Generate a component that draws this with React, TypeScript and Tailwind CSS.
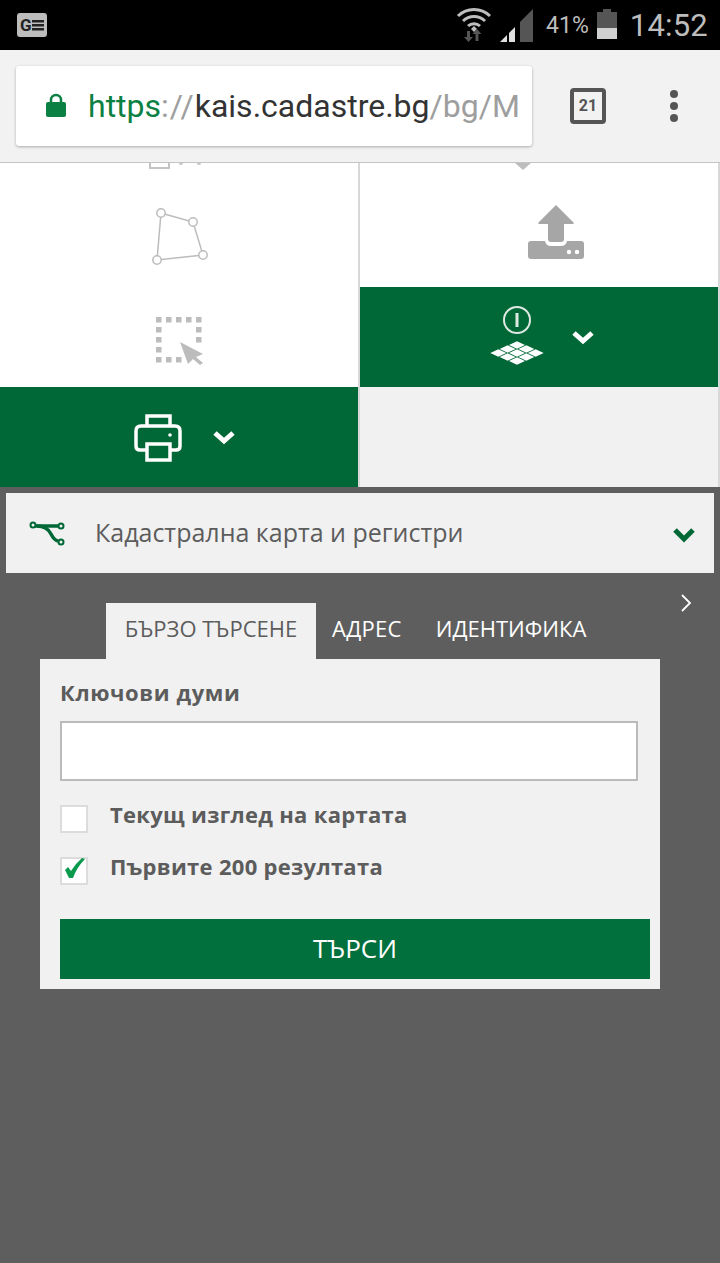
import React from 'react';

const GREEN = 'bg-[#006837]';

// статус лента
const StatusBar: React.FC = () => (
  <div className="h-[50px] bg-black flex items-center pl-[17px] pr-[12px] font-['Roboto',sans-serif] text-[#bdbdbd]">
    <svg width="30" height="24" viewBox="0 0 30 24">
      <rect width="30" height="24" rx="3" fill="#bdbdbd" />
      <text x="3" y="18" fontSize="17" fontWeight="700" fill="#222" fontFamily="Roboto, sans-serif">G</text>
      <rect x="15" y="7" width="12" height="2.5" fill="#222" />
      <rect x="15" y="11" width="12" height="2.5" fill="#222" />
      <rect x="15" y="15" width="12" height="2.5" fill="#222" />
    </svg>
    <div className="flex-1" />
    <svg width="36" height="36" viewBox="0 0 36 36" className="-mt-[3px]">
      <path d="M2 10 A23 23 0 0 1 34 10" fill="none" stroke="#bdbdbd" strokeWidth="3" />
      <path d="M7 15 A16 16 0 0 1 29 15" fill="none" stroke="#bdbdbd" strokeWidth="3" />
      <path d="M12 20 A9 9 0 0 1 24 20" fill="none" stroke="#bdbdbd" strokeWidth="3" />
      <path d="M15 23 L18 20 L21 23 L18 26 Z" fill="#bdbdbd" />
      <path d="M11 25 h3 v6 h3 l-4.500 5 l-4.500 -5 h3 Z" fill="#555" />
      <path d="M21 23 l4.500 5 h-3 v7 h-3 v-7 h-3 Z" fill="#555" />
    </svg>
    <svg width="33" height="33" viewBox="0 0 33 33" className="ml-[8px] mt-[1px]">
      <path d="M0 33 L7 26 V33 Z" fill="#e0e0e0" />
      <path d="M9 24 L15 18 V33 H9 Z" fill="#e0e0e0" />
      <path d="M20 13 L33 0 V33 H20 Z" fill="#555" />
    </svg>
    <span className="ml-[13px] text-[23px] leading-none mt-[1px]">41%</span>
    <svg width="20" height="30" viewBox="0 0 20 30" className="ml-[8px] -mt-[2px]">
      <rect x="6" y="0" width="8" height="3" fill="#555" />
      <rect x="0" y="3" width="20" height="16" fill="#555" />
      <rect x="0" y="19" width="20" height="11" fill="#d0d0d0" />
    </svg>
    <span className="ml-[13px] text-[31px] leading-none tracking-[0.2px]">14:52</span>
  </div>
);

// адресна лента
const BrowserBar: React.FC = () => (
  <div className="h-[113px] bg-[#f2f2f2] border-b border-[#c4c4c4] flex items-start pt-[16px] pl-[16px] font-['Roboto',sans-serif]">
    <div className="w-[516px] h-[80px] bg-white rounded-[3px] shadow-[0_1px_3px_rgba(0,0,0,0.3)] flex items-center pl-[30px] overflow-hidden">
      <svg width="20" height="26" viewBox="0 0 20 26" className="shrink-0">
        <path d="M5 10 V7 a5 5 0 0 1 10 0 V10" fill="none" stroke="#0b8043" strokeWidth="2.500" />
        <rect y="9" width="20" height="15" rx="2" fill="#0b8043" />
      </svg>
      <span className="ml-[22px] text-[32px] leading-none whitespace-nowrap">
        <span className="text-[#0b8043]">https</span>
        <span className="text-[#9e9e9e] tracking-[1px]">://</span>
        <span className="text-[#333]">kais.cadastre.bg</span>
        <span className="text-[#9e9e9e]">/bg/M</span>
      </span>
    </div>
    <div className="ml-[38px] mt-[22px] w-[36px] h-[36px] border-[4px] border-[#555] rounded-[4px] flex items-center justify-center text-[#555] text-[16px] font-bold leading-none">
      21
    </div>
    <div className="ml-[64px] mt-[24px] flex flex-col gap-[4px]">
      <div className="w-[8px] h-[8px] rounded-full bg-[#555]" />
      <div className="w-[8px] h-[8px] rounded-full bg-[#555]" />
      <div className="w-[8px] h-[8px] rounded-full bg-[#555]" />
    </div>
  </div>
);

const DownChevron: React.FC = () => (
  <svg width="24" height="16" viewBox="0 0 24 16">
    <path d="M3 4 L12 12 L21 4" fill="none" stroke="#fff" strokeWidth="5" />
  </svg>
);

const PolygonIcon: React.FC = () => (
  <svg width="60" height="60" viewBox="0 0 60 60" fill="#fff" stroke="#bcbcbc" strokeWidth="1.500">
    <path d="M9 5 L41 14 L51 47 L5 52 Z" fill="none" />
    <circle cx="9" cy="5" r="4.200" />
    <circle cx="41" cy="14" r="4.200" />
    <circle cx="51" cy="47" r="4.200" />
    <circle cx="5" cy="52" r="4.200" />
  </svg>
);

const SelectIcon: React.FC = () => (
  <svg width="50" height="50" viewBox="0 0 50 50" fill="#bcbcbc">
    {[0, 10, 20, 30, 40].map((x) => <rect key={`t${x}`} x={x} y="0" width="5.500" height="5.500" />)}
    {[10, 20, 30].map((y) => <rect key={`l${y}`} x="0" y={y} width="5.500" height="5.500" />)}
    {[10, 20].map((y) => <rect key={`r${y}`} x="40" y={y} width="5.500" height="5.500" />)}
    {[0, 10, 20].map((x) => <rect key={`b${x}`} x={x} y="40" width="5.500" height="5.500" />)}
    <path d="M24 25 L47 37 L40 40 L47 46 L44 48 L37 42 L32 47 Z" />
  </svg>
);

const UploadIcon: React.FC = () => (
  <svg width="56" height="54" viewBox="0 0 56 54">
    <path d="M28 0 L46 18 Q46 19 44 19 H36 V34 Q36 37 33 37 H23 Q20 37 20 34 V19 H12 Q10 19 10 18 Z" fill="#a6a6a6" />
    <path d="M3 36 H17 Q18 41 23 41 H33 Q38 41 39 36 H53 Q56 36 56 39 V51 Q56 54 53 54 H3 Q0 54 0 51 V39 Q0 36 3 36 Z" fill="#a6a6a6" />
    <circle cx="41" cy="47" r="2.200" fill="#fff" />
    <circle cx="49" cy="47" r="2.200" fill="#fff" />
  </svg>
);

const PrinterIcon: React.FC = () => (
  <svg width="48" height="48" viewBox="0 0 48 48" fill="none" stroke="#fff" strokeWidth="3.500" className="mt-[2px]">
    <path d="M13 12 V2 H36 V12" />
    <path d="M12 36 H6 Q2 36 2 32 V17 Q2 12 7 12 H41 Q46 12 46 17 V32 Q46 36 42 36 H36" />
    <rect x="13" y="30" width="23" height="16" />
    <circle cx="36" cy="21" r="1.800" fill="#fff" stroke="none" />
  </svg>
);

// 3x3 ромбоидна мрежа под иконата за информация
const GRID_CELLS = [-1, 0, 1].flatMap((i) => [-1, 0, 1].map((j) => ({ i, j })));

const InfoGridIcon: React.FC = () => (
  <svg width="56" height="62" viewBox="0 0 56 62" fill="#fff">
    <circle cx="28" cy="14" r="13" fill="none" stroke="#dfe9e3" strokeWidth="2" />
    <rect x="26.500" y="7" width="3" height="14" fill="#dfe9e3" />
    {GRID_CELLS.map(({ i, j }) => {
      const cx = 28 + (i - j) * 9.33;
      const cy = 47 + (i + j) * 4;
      return <path key={`${i}${j}`} d={`M${cx - 8} ${cy} L${cx} ${cy - 3.7} L${cx + 8} ${cy} L${cx} ${cy + 3.7} Z`} />;
    })}
  </svg>
);

const RouteIcon: React.FC = () => (
  <svg width="36" height="26" viewBox="0 0 36 26" fill="none" stroke="#006837" strokeWidth="3.500">
    <path d="M6 6 H30" />
    <path d="M8 6 Q18 6 22 14 Q25 20 29 21" />
    <circle cx="4" cy="5" r="2.500" strokeWidth="2" fill="#f1f1f1" />
    <circle cx="32" cy="6" r="2.500" strokeWidth="2" fill="#f1f1f1" />
    <circle cx="32" cy="22" r="2.500" strokeWidth="2" fill="#f1f1f1" />
  </svg>
);

const CheckBox: React.FC<{ checked?: boolean; label: string }> = ({ checked, label }) => (
  <div className="flex items-start h-[28px]">
    <div className="relative w-[28px] h-[28px] bg-white border-[2px] border-[#dcdcdc] shrink-0">
      {checked && (
        <svg width="24" height="24" viewBox="0 0 24 24" className="absolute left-0 top-0 overflow-visible">
          <path d="M3 11 L6 8 L9 12 Q13 5 20 -1 L23 0 Q15 8 11 19 L7 19 Z" fill="#0a9a4e" />
        </svg>
      )}
    </div>
    <span className="ml-[22px] -mt-[6px] text-[22px] leading-[30px] font-bold text-[#5c5c5c] tracking-[0.3px]">{label}</span>
  </div>
);

const App: React.FC = () => {
  return (
    <div className="w-[720px] h-[1263px] bg-[#5e5e5e] overflow-hidden font-['Open_Sans',sans-serif]">
      <StatusBar />
      <BrowserBar />

      {/* плочки с инструменти */}
      <div className="flex h-[324px] bg-[#d8d8d8]">
        <div className="w-[358px] flex flex-col">
          <div className="h-[224px] bg-white flex flex-col items-center">
            <svg width="60" height="6" viewBox="0 0 60 6">
              <path d="M1 0 V5 H20 V0" fill="none" stroke="#c4c4c4" strokeWidth="2" />
              <circle cx="32" cy="0" r="2" fill="#c4c4c4" />
              <circle cx="50" cy="0" r="2" fill="#c4c4c4" />
            </svg>
            <div className="mt-[39px] ml-[6px]"><PolygonIcon /></div>
            <div className="mt-[49px] ml-[4px]"><SelectIcon /></div>
          </div>
          <div className={`h-[100px] ${GREEN} flex items-center justify-center gap-[30px] pl-[12px]`}>
            <PrinterIcon />
            <DownChevron />
          </div>
        </div>
        <div className="w-[2px]" />
        <div className="w-[358px] flex flex-col">
          <div className="h-[124px] bg-white flex flex-col items-center">
            <svg width="20" height="8" viewBox="0 0 20 8" className="-ml-[32px]">
              <path d="M2 0 L10 7 L18 0 Z" fill="#bdbdbd" />
            </svg>
            <div className="mt-[34px] ml-[34px]"><UploadIcon /></div>
          </div>
          <div className={`h-[100px] ${GREEN} flex items-center justify-center gap-[26px] pl-[6px]`}>
            <InfoGridIcon />
            <DownChevron />
          </div>
          <div className="h-[100px] bg-[#f1f1f1]" />
        </div>
      </div>

      {/* акордеон */}
      <div className="mx-[6px] mt-[6px] h-[80px] bg-[#f1f1f1] flex items-center pl-[23px] pr-[18px] text-[#5c5c5c]">
        <RouteIcon />
        <span className="ml-[30px] text-[25px] leading-none -mt-[2px]">Кадастрална карта и регистри</span>
        <div className="flex-1" />
        <svg width="24" height="16" viewBox="0 0 24 16" className="mt-[3px]">
          <path d="M3 3 L12 12 L21 3" fill="none" stroke="#006837" strokeWidth="5" />
        </svg>
      </div>

      {/* панел за търсене */}
      <div className="relative mt-[30px]">
        <svg width="12" height="18" viewBox="0 0 12 18" className="absolute left-[680px] -top-[9px]">
          <path d="M2 1 L10 9 L2 17" fill="none" stroke="#fff" strokeWidth="1.800" />
        </svg>
        <div className="ml-[106px] w-[482px] h-[56px] flex overflow-hidden text-[22px] leading-none">
          <div className="w-[210px] shrink-0 bg-[#f1f1f1] text-[#5c5c5c] flex items-center justify-center pb-[6px]">БЪРЗО ТЪРСЕНЕ</div>
          <div className="ml-[16px] shrink-0 text-white flex items-center pb-[6px] tracking-[0.3px]">АДРЕС</div>
          <div className="ml-[34px] shrink-0 text-white flex items-center pb-[6px] whitespace-nowrap">ИДЕНТИФИКАЦИЯ</div>
        </div>
        <div className="ml-[40px] w-[620px] h-[330px] bg-[#f1f1f1] pl-[20px] pt-[18px]">
          <div className="text-[22px] leading-[30px] font-bold text-[#5c5c5c] tracking-[0.6px]">Ключови думи</div>
          <div className="mt-[14px] w-[578px] h-[60px] bg-white border-[2px] border-[#bbbbbb]" />
          <div className="mt-[24px] flex flex-col gap-[24px]">
            <CheckBox label="Текущ изглед на картата" />
            <CheckBox checked label="Първите 200 резултата" />
          </div>
          <div className="mt-[34px] w-[590px] h-[60px] bg-[#02703c] text-white text-[26px] leading-none flex items-center justify-center pb-[2px]">ТЪРСИ</div>
        </div>
      </div>
    </div>
  );
};

export default App;
